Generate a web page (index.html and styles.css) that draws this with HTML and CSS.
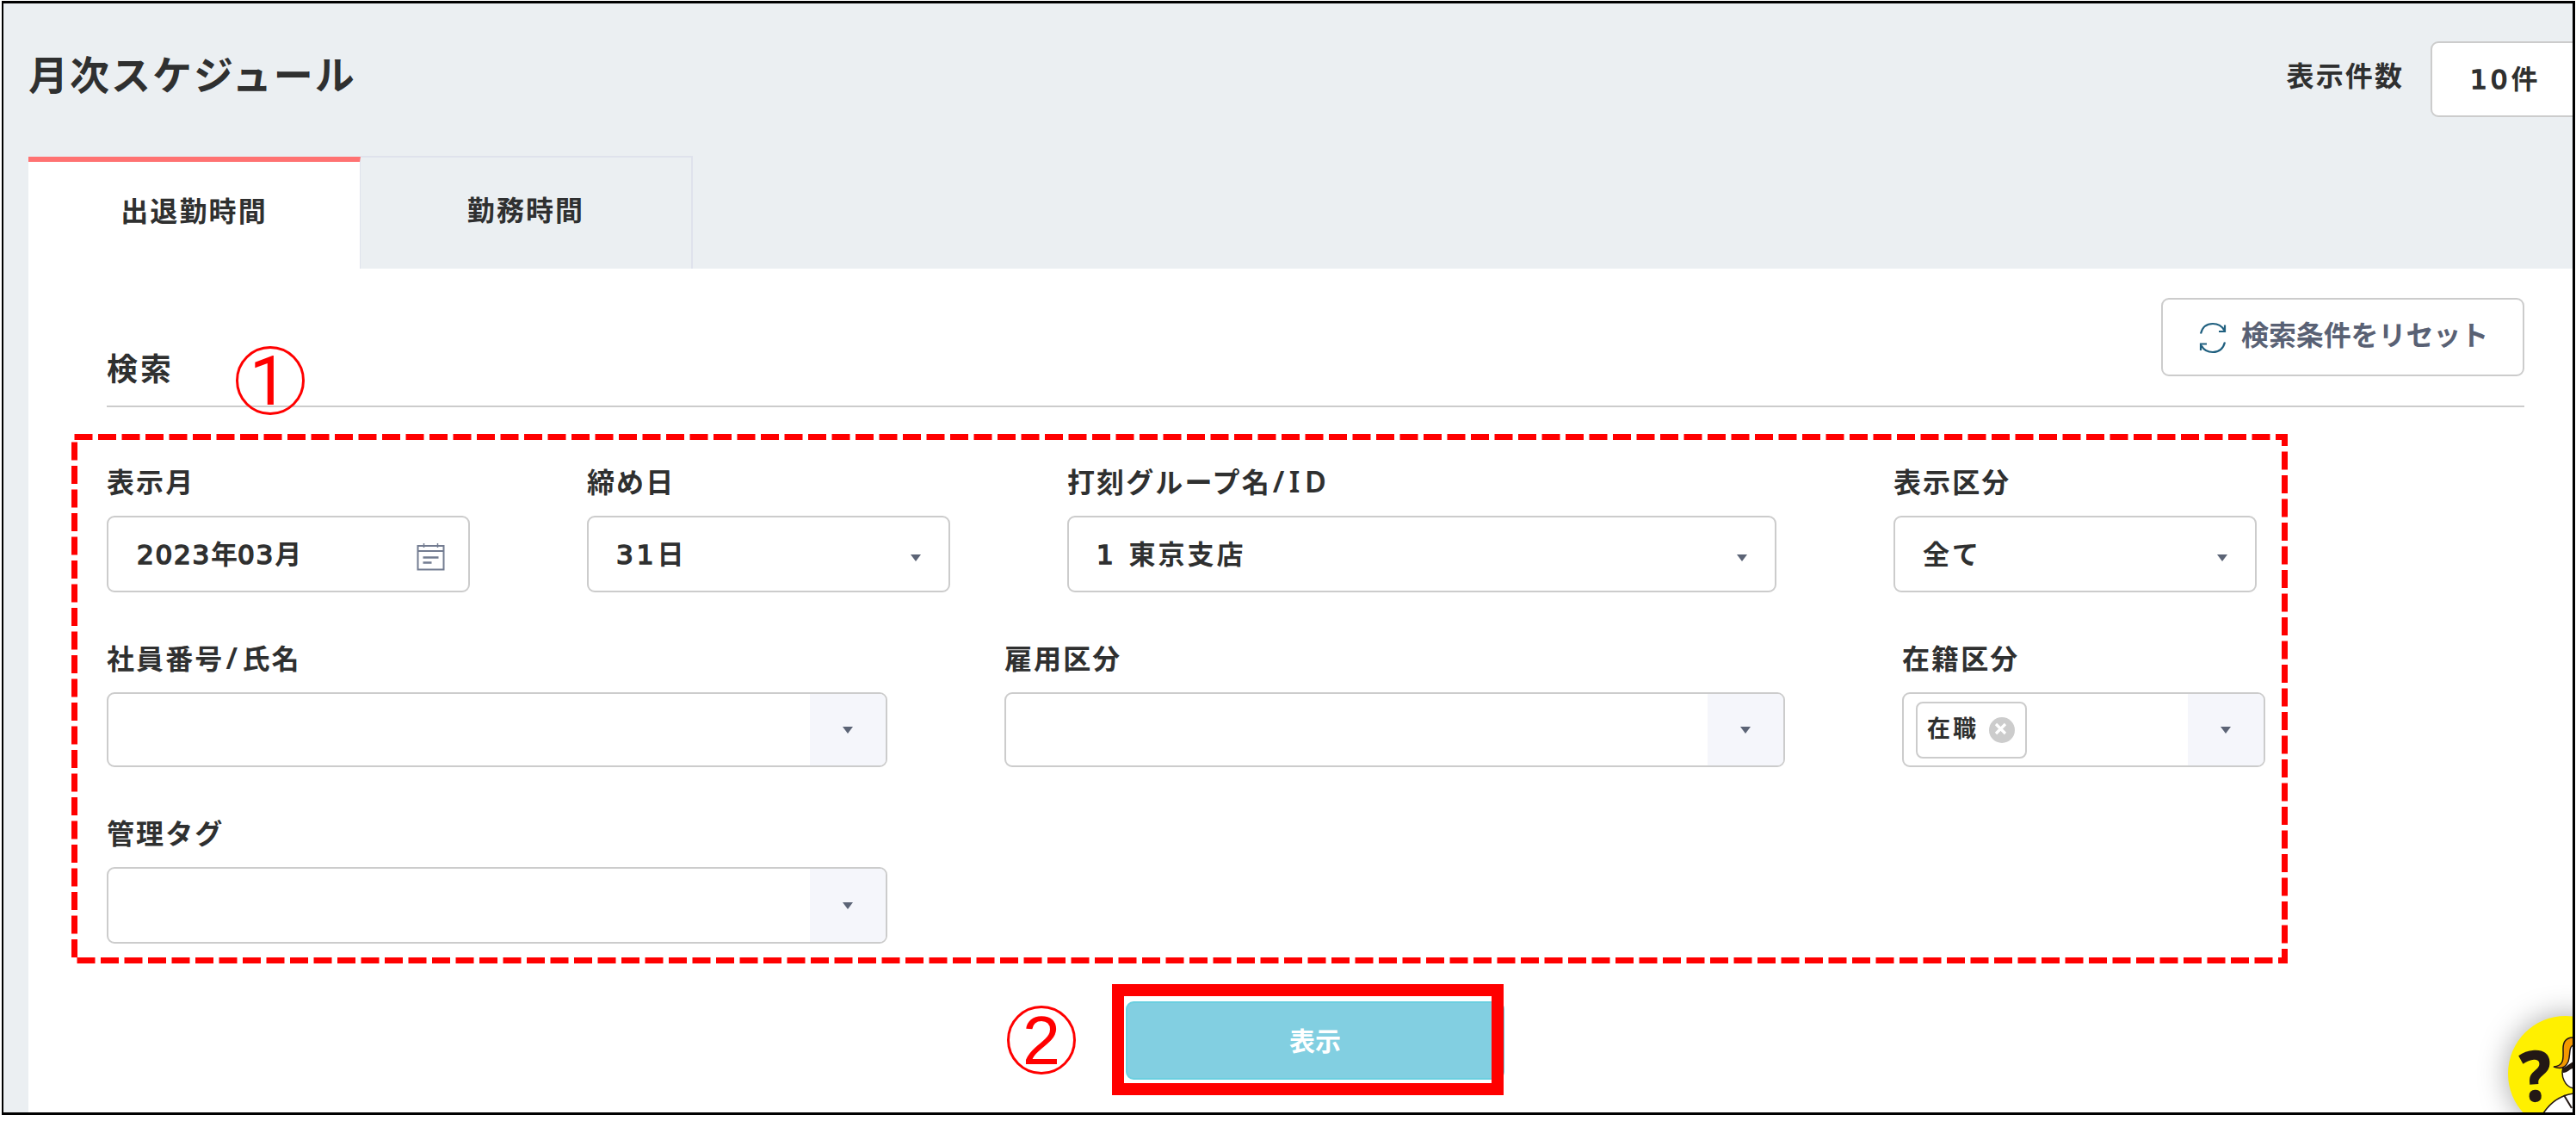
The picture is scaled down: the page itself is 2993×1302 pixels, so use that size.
FILE: index.html
```
<!DOCTYPE html>
<html lang="ja">
<head>
  <meta charset="UTF-8" />
  <title>月次スケジュール</title>
  <link rel="stylesheet" href="styles.css">
</head>
<body>
  <div class="frame">
    <header class="page-header">
      <h1>月次スケジュール</h1>
      <div class="page-size">
        <span>表示件数</span>
        <div class="page-size-select"><span class="num">10</span>件</div>
      </div>
    </header>

    <nav class="tabs">
      <div class="tab active">出退勤時間</div>
      <div class="tab">勤務時間</div>
    </nav>

    <main class="panel">
      <div class="search-head">
        <h2>検索</h2>
        <button class="reset" type="button">
          <svg width="32" height="38" viewBox="0 0 32 38" fill="none" stroke="#1f5f7f" stroke-width="2.2">
            <path d="M2 14.500C4 6.500 9 3 16 3c6 0 10.500 2.500 13.200 7.500M30 4.500v7.500h-7" />
            <path d="M30 24.500C28 32.500 23 36 16 36c-6 0-10.500-2.500-13.200-7.500M2 34v-7.500h7" />
          </svg>
          <span>検索条件をリセット</span>
        </button>
      </div>

      <div class="row row-1">
        <div class="field">
          <label>表示月</label>
          <div class="box date">
            <span><span class="num">2023</span>年<span class="num">03</span>月</span>
            <svg width="33" height="33" viewBox="0 0 33 33" fill="none" stroke="#737c91" stroke-width="2">
              <path d="M1.500 4h30v27.500h-30zM1.500 10h30" />
              <path d="M8.500 1v5M24.500 1v5" stroke-width="1.500" />
              <path d="M7.500 17.500h18M7.500 23.500h10" stroke-width="2.500" />
            </svg>
          </div>
        </div>
        <div class="field">
          <label>締め日</label>
          <div class="box select"><span><span class="num">31</span>日</span><i class="arrow"></i></div>
        </div>
        <div class="field">
          <label>打刻グループ名<span class="latin">/ID</span></label>
          <div class="box select"><span><span class="num">1</span> 東京支店</span><i class="arrow"></i></div>
        </div>
        <div class="field">
          <label>表示区分</label>
          <div class="box select"><span>全て</span><i class="arrow"></i></div>
        </div>
      </div>

      <div class="row row-2">
        <div class="field">
          <label>社員番号<span class="latin">/</span>氏名</label>
          <div class="box combo"><div class="combo-btn"><i class="arrow"></i></div></div>
        </div>
        <div class="field">
          <label>雇用区分</label>
          <div class="box combo"><div class="combo-btn"><i class="arrow"></i></div></div>
        </div>
        <div class="field">
          <label>在籍区分</label>
          <div class="box combo">
            <div class="tag">
              <span>在職</span>
              <svg width="30" height="30" viewBox="0 0 30 30">
                <circle cx="15" cy="15" r="15" fill="#ccc" />
                <path d="M8 8l11 11M19 8L8 19" stroke="#fff" stroke-width="3.200" />
              </svg>
            </div>
            <div class="combo-btn"><i class="arrow"></i></div>
          </div>
        </div>
      </div>

      <div class="row row-3">
        <div class="field">
          <label>管理タグ</label>
          <div class="box combo"><div class="combo-btn"><i class="arrow"></i></div></div>
        </div>
      </div>

      <button class="submit" type="button">表示</button>
    </main>

    <div class="help">
      <span class="help-mark">?</span>
      <!-- character standing beside the question mark -->
      <svg class="help-figure" width="35" height="112" viewBox="2954 1180 35 112">
        <path d="M2955 1293c8-12 20-21 35-23v23z" fill="#fff" stroke="#231815" stroke-width="1.500" />
        <path d="M2979 1272l9 15" stroke="#231815" stroke-width="2" />
        <path d="M2978 1240c-3 10 2 22 12 24v-58c-7 4-6 20-12 34z" fill="#fff" stroke="#231815" stroke-width="1.500" />
        <path d="M2990 1205c-7 0-12 4-12 13 0 10 2 20-11 21 8 3 14 1 17-6 3-9 0-17 6-19z" fill="#f39800" stroke="#231815" stroke-width="1.500" />
        <path d="M2977 1240c5 0 8-5 13-7v8c-4 0-6 5-12 5z" fill="#231815" />
      </svg>
    </div>

    <!-- step markers -->
    <svg class="guide" width="2985" height="1288" viewBox="4 4 2985 1288" fill="none" stroke="#f00">
      <path d="M86.500 507.500H2654.500V1115.500H86.500Z" stroke-width="7" stroke-dasharray="21 6.500" />
      <rect x="1299" y="1150" width="441" height="115" stroke-width="14" />
      <circle cx="314" cy="442" r="38.500" stroke-width="3" />
      <circle cx="1210" cy="1208" r="38.500" stroke-width="3" />
      <text class="step step-one" x="312" y="470">1</text>
      <text class="step" x="1210" y="1236">2</text>
    </svg>
  </div>
</body>
</html>
```
FILE: styles.css
```
* {
  box-sizing: border-box;
}
body {
  margin: 0;
  padding: 1px 1px 0 2px;
  background: #fff;
  color: #2f3030;
  font-family: "Noto Sans", "Noto Sans CJK JP", sans-serif;
  font-weight: 700;
  font-size: 32px;
  letter-spacing: 2.1px;
}
h1,
h2 {
  margin: 0;
}
button {
  font-family: inherit;
  font-weight: 700;
}
.frame {
  position: relative;
  height: 1294px;
  border: 3px solid #000;
  border-left-width: 2px;
  background: #ebeff2;
  overflow: hidden;
}

/* Wider, lighter digits and latin letters */
.num {
  font-weight: 400;
  letter-spacing: 4px;
  -webkit-text-stroke: 1.7px currentColor;
}
.latin {
  margin-left: 2px;
  font-weight: 600;
  font-size: 34px;
  letter-spacing: 5.5px;
}

/* Page title and page size */
.page-header {
  display: flex;
  justify-content: space-between;
  height: 177px;
  padding-left: 29px;
}
.page-header h1 {
  padding-top: 50px;
  font-size: 46px;
  line-height: 64px;
  letter-spacing: 2px;
}
.page-size {
  display: flex;
  gap: 31px;
  height: 88px;
  margin: 44px -35px 0 0;
  line-height: 80px;
}
.page-size-select {
  width: 200px;
  padding-left: 44px;
  border: 2px solid #ccc;
  border-radius: 9px;
  background: #fff;
  font-family: "DejaVu Sans", "Noto Sans CJK JP", sans-serif;
  font-size: 31px;
  line-height: 84px;
}

/* Tabs */
.tabs {
  display: flex;
  height: 131px;
  margin-left: 29px;
}
.tab {
  width: 386px;
  border: 2px solid #dfe2ec;
  border-left: 0;
  border-bottom: 0;
  line-height: 122px;
  text-align: center;
}
.tab.active {
  margin-top: 1px;
  border-top: 6px solid #ff7272;
  background: #fff;
  line-height: 113px;
  border-right-width: 1px;
}

/* Search panel */
.panel {
  height: 980px;
  margin-left: 29px;
  padding: 0 56px 0 91px;
  background: #fff;
}
.search-head {
  display: flex;
  justify-content: space-between;
  height: 161px;
  border-bottom: 2px solid #ccc;
}
.search-head h2 {
  padding-top: 92px;
  font-size: 36px;
  line-height: 50px;
  letter-spacing: 3px;
}
.reset {
  display: flex;
  align-items: center;
  gap: 17px;
  width: 422px;
  height: 91px;
  margin-top: 34px;
  padding: 0 0 0 42px;
  border: 2px solid #ccc;
  border-radius: 9px;
  background: #fff;
  color: #596174;
  font-size: 32px;
  letter-spacing: -0.1px;
}
.reset span {
  padding-bottom: 9px;
}

.row {
  display: grid;
  column-gap: 136px;
}
.row-1 {
  grid-template-columns: 422px 422px 824px 422px;
  margin-top: 66px;
}
.row-2 {
  grid-template-columns: 907px 907px 422px;
  margin-top: 56px;
}
.row-3 {
  grid-template-columns: 907px;
  margin-top: 56px;
}
.field label {
  display: block;
  height: 60px;
  line-height: 41px;
}
.box {
  display: flex;
  justify-content: space-between;
  align-items: center;
  height: 89px;
  border: 2px solid #ccc;
  border-radius: 9px;
  background: #fff;
  overflow: hidden;
  font-family: "DejaVu Sans", "Noto Sans CJK JP", sans-serif;
  font-size: 31px;
  letter-spacing: 3px;
}
.row-2 .box {
  height: 87px;
}
.select {
  padding: 0 32px;
}
.date {
  padding: 0 27px 0 33px;
  letter-spacing: 0;
}
.date .num {
  letter-spacing: 1.8px;
}
.select > span,
.date > span {
  padding-bottom: 5px;
}
.date svg {
  margin-top: 5px;
}
.select .arrow {
  margin-top: 9px;
}
.arrow {
  border: 6px solid transparent;
  border-top: 8px solid #5c6476;
  border-bottom: 0;
}
.combo-btn {
  display: flex;
  justify-content: center;
  align-items: center;
  width: 88px;
  height: 100%;
  margin-left: auto;
  background: #f5f6fb;
}
.tag {
  display: flex;
  align-items: center;
  gap: 12px;
  width: 129px;
  height: 66px;
  margin-left: 14px;
  padding-left: 11px;
  border: 2px solid #ccc;
  border-radius: 8px;
  font-size: 27px;
}
.tag span {
  padding-bottom: 6px;
}
.submit {
  display: block;
  width: 440px;
  height: 91px;
  margin: 67px 0 0 1184px;
  padding: 0 0 3px;
  border: 2px solid #6bcfe0;
  border-radius: 9px;
  background: #82cfe1;
  color: #fff;
  font-size: 30px;
  letter-spacing: 0;
}

/* Help bubble */
.help {
  position: absolute;
  left: 2910px;
  top: 1176px;
  width: 134px;
  height: 134px;
  border-radius: 50%;
  background: #fff000;
  box-shadow: 0 0 34px rgba(0, 0, 0, 0.35);
}
.help-mark {
  position: absolute;
  left: 12px;
  top: 37px;
  color: #231815;
  font-size: 82px;
  font-weight: 800;
  line-height: 60px;
  letter-spacing: 0;
  transform: rotate(-4deg) scaleX(0.93);
}
.help-figure {
  position: absolute;
  left: 40px;
  top: 0;
}

.guide {
  position: absolute;
  left: 0;
  top: 0;
}
.step {
  fill: #f00;
  stroke: none;
  font-family: "Liberation Sans", Arial, sans-serif;
  font-size: 79px;
  font-weight: 400;
  letter-spacing: 0;
  text-anchor: middle;
}
.step-one {
  font-family: Roboto, sans-serif;
}
```
